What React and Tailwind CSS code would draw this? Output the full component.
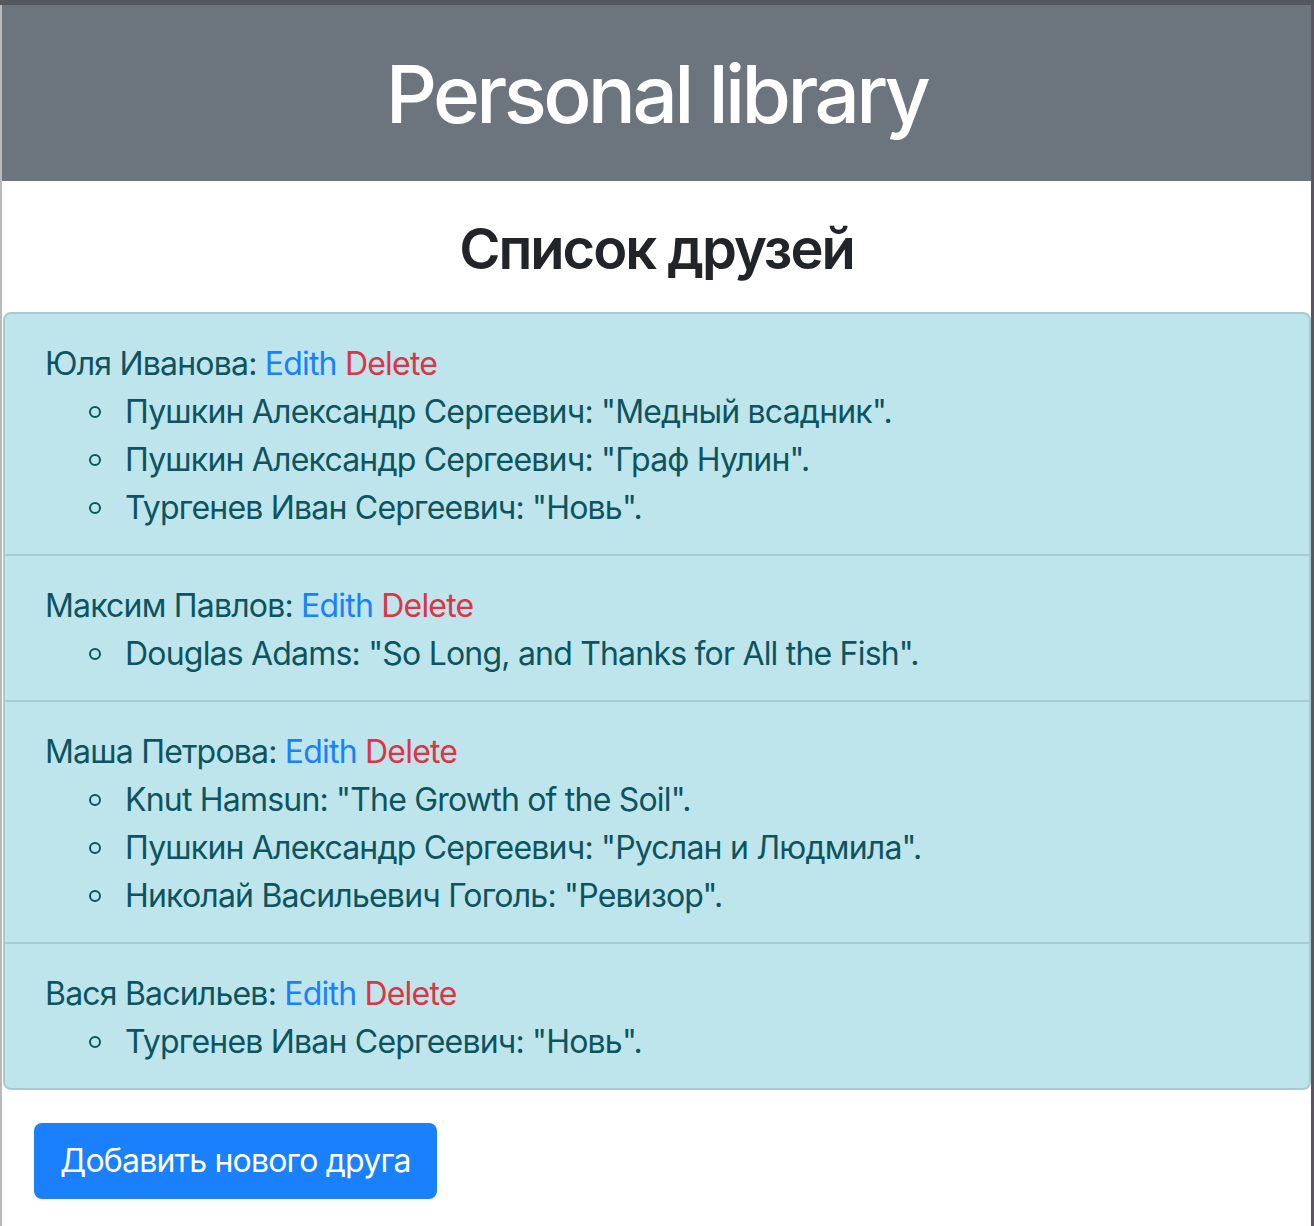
const friends = [
  {
    name: "Юля Иванова",
    books: [
      'Пушкин Александр Сергеевич: "Медный всадник".',
      'Пушкин Александр Сергеевич: "Граф Нулин".',
      'Тургенев Иван Сергеевич: "Новь".',
    ],
  },
  {
    name: "Максим Павлов",
    books: ['Douglas Adams: "So Long, and Thanks for All the Fish".'],
  },
  {
    name: "Маша Петрова",
    books: [
      'Knut Hamsun: "The Growth of the Soil".',
      'Пушкин Александр Сергеевич: "Руслан и Людмила".',
      'Николай Васильевич Гоголь: "Ревизор".',
    ],
  },
  {
    name: "Вася Васильев",
    books: ['Тургенев Иван Сергеевич: "Новь".'],
  },
];

const App = () => {
  return (
    <div className="flex min-h-[1226px] flex-col bg-white font-['Inter','Noto_Sans',sans-serif] text-[32px] leading-[48px] tracking-[-0.8px] text-[#212529]">
      <div className="h-[5px] bg-[#54575c]" />
      <div className="flex flex-1">
        <div className="w-[2px] bg-[#b9b9bc]" />
        <div className="flex-1">
          <header className="bg-[#6c757d] pt-[41px] pb-[39px] text-center">
            <h1 className="text-[80px] font-medium leading-[96px] tracking-[-3.6px] text-white">
              Personal library
            </h1>
          </header>

          <h3 className="mt-[35px] mb-[29px] text-center text-[56px] font-semibold leading-[67px] tracking-[-2px]">
            Список друзей
          </h3>

          <ul className="ml-px overflow-hidden rounded-[8px] border-2 border-[#a6cbd1] bg-[#bee5eb] text-[#0c5460]">
            {friends.map((friend, i) => (
              <li
                key={friend.name}
                className={`px-[40px] pt-[26px] pb-[22px] ${i > 0 ? "border-t-2 border-[#a6cbd1]" : ""}`}
              >
                <div>
                  {friend.name}:{" "}
                  <a className="text-[#1a80fb]">Edith</a>{" "}
                  <a className="text-[#dc3545]">Delete</a>
                </div>
                <ul className="pl-[44px]">
                  {friend.books.map((book) => (
                    <li key={book} className="flex items-center">
                      <span className="mr-[24px] h-[12px] w-[12px] shrink-0 rounded-full border-2 border-[#0c5460]" />
                      <span>{book}</span>
                    </li>
                  ))}
                </ul>
              </li>
            ))}
          </ul>

          <div className="px-[32px] pt-[33px] pb-[28px]">
            <button
              type="button"
              className="rounded-[8px] bg-[#1a80fb] px-[26px] py-[14px] text-[32px] leading-[48px] text-white"
            >
              Добавить нового друга
            </button>
          </div>
        </div>
        <div className="w-[3px] bg-[#5a5560]" />
      </div>
    </div>
  );
};

export default App;
